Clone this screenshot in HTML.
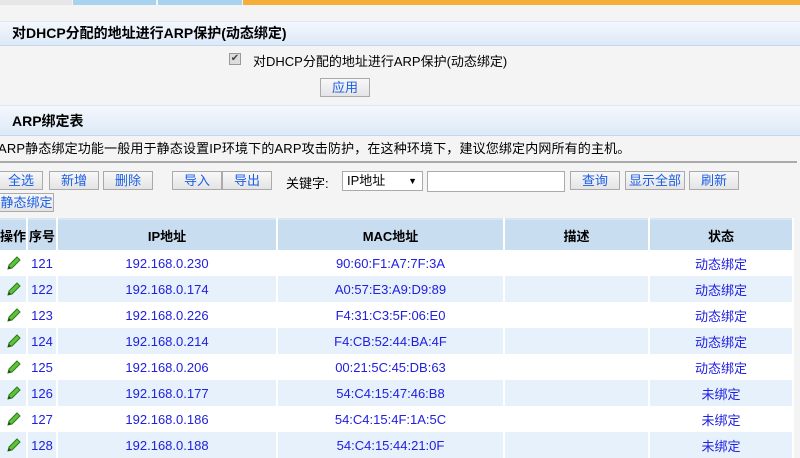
<!DOCTYPE html>
<html><head><meta charset="utf-8"><style>
*{margin:0;padding:0;box-sizing:border-box}
body{width:800px;height:441px;overflow:hidden;background:#f4f4f4;font-family:"Liberation Sans","Noto Sans CJK SC",sans-serif;font-size:13px;color:#000;position:relative}
.a{position:absolute}
.hd{left:0;width:800px;background:linear-gradient(#f4f7fc,#dde9f8);border-top:1px solid #dfe8f4;border-bottom:1px solid #c3d8ef;font-weight:bold;padding-left:12px}
.btn{position:absolute;height:19px;border:1px solid #aaa;background:linear-gradient(#f8f8f8,#e4e4e4);color:#1a5ee8;font-size:13px;text-align:center;line-height:17px}
table{position:absolute;left:0;top:218px;width:794px;border-collapse:collapse;border-top:2px solid #d8e6f2}
th{background:#c8ddf0;height:31px;font-weight:bold;border-right:2px solid #fff;font-size:13px}
td{height:26px;text-align:center;color:#2020e0;border-right:2px solid #fff;font-size:13px}
tr.o td{background:#e6f1fb}
tr.e td{background:#fff}
td svg{display:block;margin:0 auto}
</style></head><body>
<div class="a" style="top:0;left:0;width:72px;height:5px;background:#e6e6e6"></div>
<div class="a" style="top:0;left:73px;width:83px;height:5px;background:#a8d3ee"></div>
<div class="a" style="top:0;left:158px;width:84px;height:5px;background:#a8d3ee"></div>
<div class="a" style="top:0;left:243px;width:557px;height:5px;background:#f5ae38"></div>

<div class="a hd" style="top:21px;height:25px;line-height:22px;font-size:14px">对DHCP分配的地址进行ARP保护(动态绑定)</div>
<div class="a" style="left:229px;top:53px;width:12px;height:12px;border:1px solid #999;background:#ddd;font-size:10px;line-height:10px;text-align:center;color:#444">✔</div>
<div class="a" style="left:253px;top:51px;font-size:13px">对DHCP分配的地址进行ARP保护(动态绑定)</div>
<div class="btn" style="left:320px;top:78px;width:50px">应用</div>

<div class="a hd" style="top:105px;height:31px;line-height:30px;font-size:14px">ARP绑定表</div>
<div class="a" style="left:-2px;top:138px;font-size:13px;letter-spacing:0.15px">ARP静态绑定功能一般用于静态设置IP环境下的ARP攻击防护，在这种环境下，建议您绑定内网所有的主机。</div>
<div class="a" style="left:0;top:161px;width:797px;height:2px;background:#aaa"></div>

<div class="btn" style="left:-1px;top:171px;width:44px">全选</div>
<div class="btn" style="left:49px;top:171px;width:50px">新增</div>
<div class="btn" style="left:103px;top:171px;width:50px">删除</div>
<div class="btn" style="left:172px;top:171px;width:50px">导入</div>
<div class="btn" style="left:222px;top:171px;width:50px">导出</div>
<div class="a" style="left:286px;top:173px">关键字:</div>
<div class="a" style="left:342px;top:171px;width:81px;height:20px;border:1px solid #aaa;background:#fff;padding-left:4px;line-height:18px">IP地址<span style="position:absolute;right:5px;font-size:9px">▼</span></div>
<div class="a" style="left:427px;top:171px;width:138px;height:21px;border:1px solid #aaa;background:#fff"></div>
<div class="btn" style="left:570px;top:171px;width:50px">查询</div>
<div class="btn" style="left:625px;top:171px;width:60px">显示全部</div>
<div class="btn" style="left:689px;top:171px;width:50px">刷新</div>
<div class="btn" style="left:-1px;top:193px;width:55px">静态绑定</div>

<svg width="0" height="0" style="position:absolute"><defs><g id="p"><path d="M3 14 L4 10 L12 2 L15 5 L7 13 Z" fill="#5cc43a" stroke="#2f7a1a" stroke-width="1"/><path d="M3 14 L4 11 L6 13 Z" fill="#333"/></g></defs></svg>

<table>
<tr><th style="width:27px">操作</th><th style="width:30px">序号</th><th style="width:220px">IP地址</th><th style="width:227px">MAC地址</th><th style="width:145px">描述</th><th>状态</th></tr>
<tr class="e"><td><svg width="16" height="16"><use href="#p"/></svg></td><td>121</td><td>192.168.0.230</td><td>90:60:F1:A7:7F:3A</td><td></td><td>动态绑定</td></tr>
<tr class="o"><td><svg width="16" height="16"><use href="#p"/></svg></td><td>122</td><td>192.168.0.174</td><td>A0:57:E3:A9:D9:89</td><td></td><td>动态绑定</td></tr>
<tr class="e"><td><svg width="16" height="16"><use href="#p"/></svg></td><td>123</td><td>192.168.0.226</td><td>F4:31:C3:5F:06:E0</td><td></td><td>动态绑定</td></tr>
<tr class="o"><td><svg width="16" height="16"><use href="#p"/></svg></td><td>124</td><td>192.168.0.214</td><td>F4:CB:52:44:BA:4F</td><td></td><td>动态绑定</td></tr>
<tr class="e"><td><svg width="16" height="16"><use href="#p"/></svg></td><td>125</td><td>192.168.0.206</td><td>00:21:5C:45:DB:63</td><td></td><td>动态绑定</td></tr>
<tr class="o"><td><svg width="16" height="16"><use href="#p"/></svg></td><td>126</td><td>192.168.0.177</td><td>54:C4:15:47:46:B8</td><td></td><td>未绑定</td></tr>
<tr class="e"><td><svg width="16" height="16"><use href="#p"/></svg></td><td>127</td><td>192.168.0.186</td><td>54:C4:15:4F:1A:5C</td><td></td><td>未绑定</td></tr>
<tr class="o"><td><svg width="16" height="16"><use href="#p"/></svg></td><td>128</td><td>192.168.0.188</td><td>54:C4:15:44:21:0F</td><td></td><td>未绑定</td></tr>
</table>
</body></html>
